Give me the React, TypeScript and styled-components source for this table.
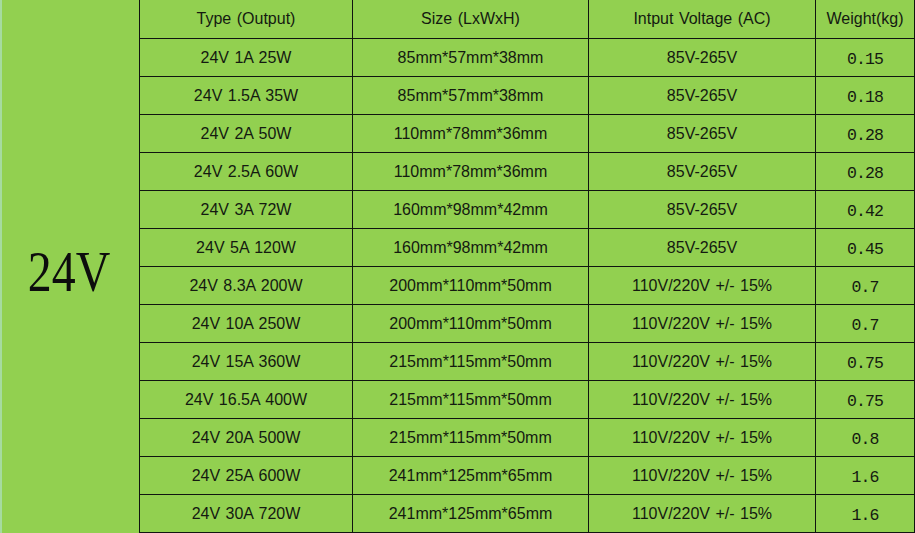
import React from "react";
import styled, { createGlobalStyle } from "styled-components";

type Spec = {
  type: string;
  size: string;
  voltage: string;
  weight: string;
};

const specs: Spec[] = [
  { type: "24V 1A 25W", size: "85mm*57mm*38mm", voltage: "85V-265V", weight: "0.15" },
  { type: "24V 1.5A 35W", size: "85mm*57mm*38mm", voltage: "85V-265V", weight: "0.18" },
  { type: "24V 2A 50W", size: "110mm*78mm*36mm", voltage: "85V-265V", weight: "0.28" },
  { type: "24V 2.5A 60W", size: "110mm*78mm*36mm", voltage: "85V-265V", weight: "0.28" },
  { type: "24V 3A 72W", size: "160mm*98mm*42mm", voltage: "85V-265V", weight: "0.42" },
  { type: "24V 5A 120W", size: "160mm*98mm*42mm", voltage: "85V-265V", weight: "0.45" },
  { type: "24V 8.3A 200W", size: "200mm*110mm*50mm", voltage: "110V/220V +/- 15%", weight: "0.7" },
  { type: "24V 10A 250W", size: "200mm*110mm*50mm", voltage: "110V/220V +/- 15%", weight: "0.7" },
  { type: "24V 15A 360W", size: "215mm*115mm*50mm", voltage: "110V/220V +/- 15%", weight: "0.75" },
  { type: "24V 16.5A 400W", size: "215mm*115mm*50mm", voltage: "110V/220V +/- 15%", weight: "0.75" },
  { type: "24V 20A 500W", size: "215mm*115mm*50mm", voltage: "110V/220V +/- 15%", weight: "0.8" },
  { type: "24V 25A 600W", size: "241mm*125mm*65mm", voltage: "110V/220V +/- 15%", weight: "1.6" },
  { type: "24V 30A 720W", size: "241mm*125mm*65mm", voltage: "110V/220V +/- 15%", weight: "1.6" },
];

const GlobalStyle = createGlobalStyle`
  html, body {
    margin: 0;
    padding: 0;
    background: #92d050;
  }
`;

const Sheet = styled.div`
  display: grid;
  grid-template-columns: 140px 213px 236px 227px 99px;
  grid-template-rows: 39px repeat(13, 38px);
  width: 915px;
  height: 533px;
  background: #92d050;
  color: #141a10;
`;

const VoltageCell = styled.div`
  grid-row: 1 / span 14;
  grid-column: 1;
  box-sizing: border-box;
  border-right: 1px solid #101510;
  box-shadow: inset 2px 0 0 #a6dba0;
  display: flex;
  align-items: center;
  justify-content: center;
  padding-top: 10px;
`;

const BigLabel = styled.span`
  display: inline-block;
  font-family: "Liberation Serif", serif;
  font-size: 57px;
  color: #0d0d0d;
  transform: scaleX(0.84);
`;

const Cell = styled.div<{ $mono?: boolean }>`
  box-sizing: border-box;
  border-right: 1px solid #101510;
  border-bottom: 1px solid #101510;
  display: flex;
  align-items: center;
  justify-content: center;
  padding-top: ${(p) => (p.$mono ? "3px" : "0")};
  font-family: ${(p) => (p.$mono ? '"Liberation Mono", monospace' : '"Liberation Sans", Arial, sans-serif')};
  font-size: ${(p) => (p.$mono ? "16.5px" : "16px")};
  letter-spacing: ${(p) => (p.$mono ? "-0.9px" : "0")};
  word-spacing: ${(p) => (p.$mono ? "0" : "1px")};
  white-space: pre;
`;

const App = () => {
  return (
    <>
      <GlobalStyle />
      <Sheet>
        <VoltageCell>
          <BigLabel>24V</BigLabel>
        </VoltageCell>
        <Cell>Type (Output)</Cell>
        <Cell>Size (LxWxH)</Cell>
        <Cell>Intput Voltage (AC)</Cell>
        <Cell>Weight(kg)</Cell>
        {specs.map((s) => (
          <React.Fragment key={s.type}>
            <Cell>{s.type}</Cell>
            <Cell>{s.size}</Cell>
            <Cell>{s.voltage}</Cell>
            <Cell $mono>{s.weight}</Cell>
          </React.Fragment>
        ))}
      </Sheet>
    </>
  );
};

export default App;
